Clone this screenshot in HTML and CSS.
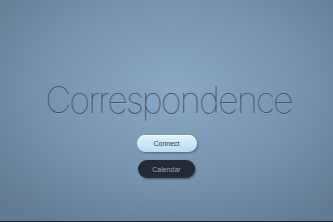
FILE: index.html
```html
<!DOCTYPE html>
<html lang="en">

<head>
    <meta charset="UTF-8">
    <title>Correspondence</title>
    <link rel="stylesheet" href="styles.css">
</head>

<body>
    <main class="screen">
        <h1 class="title">Correspondence</h1>
        <div class="actions">
            <button class="btn btn-connect">Connect</button>
            <button class="btn btn-calendar">Calendar</button>
        </div>
    </main>
</body>

</html>
```

FILE: styles.css
```css
html {
    background: #1a2230;
}

body {
    margin: 0;
    font-family: Inter, 'Liberation Sans', Arial, sans-serif;
}

.screen {
    height: 221px;
    background: radial-gradient(ellipse 230px 160px at 172px 90px, #8aa8c4 0%, #7893ad 55%, #627b93 100%);
    display: flex;
    flex-direction: column;
    align-items: center;
    overflow: hidden;
}

.title {
    margin: 78px 0 0 4px;
    font-size: 36px;
    font-weight: 100;
    line-height: 44px;
    color: #3c4b5b;
    letter-spacing: -1.9px;
    text-shadow: 0 1px 0 rgba(255, 255, 255, 0.1);
}

.actions {
    margin-top: 13px;
    display: flex;
    flex-direction: column;
    align-items: center;
    gap: 8px;
}

.btn {
    height: 17px;
    border: none;
    border-radius: 9px;
    padding: 0;
    font-family: 'Liberation Sans', Arial, sans-serif;
    font-size: 7px;
    cursor: pointer;
}

.btn-connect {
    width: 60px;
    background: linear-gradient(#e2f3fb, #b6dcef);
    color: #2c3744;
    box-shadow: 1px 1px 2px rgba(30, 40, 55, 0.45), inset 0 1px 0 rgba(255, 255, 255, 0.7);
}

.btn-calendar {
    width: 57px;
    height: 18px;
    background: #232a33;
    color: #9aa6b2;
    box-shadow: 1px 1px 2px rgba(20, 28, 40, 0.5);
}
```
